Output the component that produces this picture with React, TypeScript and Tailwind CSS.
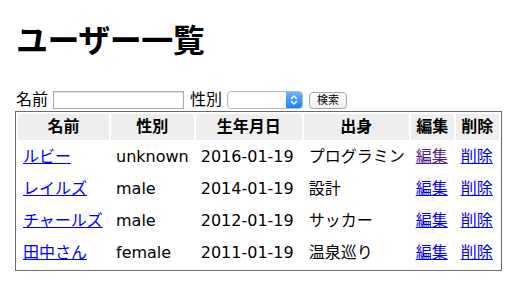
import React from 'react';

type User = {
  name: string;
  gender: string;
  birth: string;
  from: string;
  visited?: boolean;
};

const USERS: User[] = [
  { name: 'ルビー', gender: 'unknown', birth: '2016-01-19', from: 'プログラミン', visited: true },
  { name: 'レイルズ', gender: 'male', birth: '2014-01-19', from: '設計' },
  { name: 'チャールズ', gender: 'male', birth: '2012-01-19', from: 'サッカー' },
  { name: '田中さん', gender: 'female', birth: '2011-01-19', from: '温泉巡り' },
];

const FONT = "font-['DejaVu_Sans','Noto_Sans_CJK_JP',sans-serif]";

export default function App() {
  return (
    <div className={`${FONT} w-[528px] h-[292px] bg-white text-black pl-4 pt-[21px]`}>
      <h1 className="text-[32px] font-bold leading-[40px] tracking-[-0.5px]">ユーザー一覧</h1>

      {/* Search form */}
      <div className="mt-[29px] h-[20px] flex items-center text-[16px] leading-[20px]">
        <span>名前</span>
        <input
          type="text"
          className="ml-[5px] w-[131px] h-[18px] border border-[#a9a9a9] shadow-[inset_0_1px_1px_rgba(0,0,0,0.12)] bg-white outline-none"
        />
        <span className="ml-[6px]">性別</span>
        <div className="ml-[5px] w-[76px] h-[18px] rounded-[4px] border border-[#b5b5b5] bg-white flex justify-end overflow-hidden">
          <div className="w-[16px] h-full bg-[linear-gradient(#6cb3fa,#1a82fb)] flex items-center justify-center">
            <svg width="8" height="12" viewBox="0 0 8 12" fill="none" stroke="white" strokeWidth="1.4" strokeLinecap="round" strokeLinejoin="round">
              <path d="M1.5 4.5L4 2l2.5 2.5" />
              <path d="M1.5 7.5L4 10l2.5-2.5" />
            </svg>
          </div>
        </div>
        <button className="ml-[6px] w-[38px] h-[17px] rounded-[4px] border border-[#a6a6a6] bg-[linear-gradient(#ffffff,#f0f0f0)] text-[11px] leading-[15px] flex items-center justify-center">
          検索
        </button>
      </div>

      {/* User table */}
      <table className="mt-px -ml-px border border-[#6b6b6b] border-separate border-spacing-[2px] text-[16px] leading-[20px]">
        <thead>
          <tr className="h-[26px]">
            <th className="w-[91px] bg-[#eeeeee] p-0 font-bold text-center">名前</th>
            <th className="w-[81px] bg-[#eeeeee] p-0 font-bold text-center">性別</th>
            <th className="w-[106px] bg-[#eeeeee] p-0 font-bold text-center">生年月日</th>
            <th className="w-[105px] bg-[#eeeeee] p-0 font-bold text-center">出身</th>
            <th className="w-[43px] bg-[#eeeeee] p-0 font-bold text-center">編集</th>
            <th className="w-[43px] bg-[#eeeeee] p-0 font-bold text-center">削除</th>
          </tr>
        </thead>
        <tbody>
          {USERS.map((u) => (
            <tr key={u.name} className="h-[30px]">
              <td className="px-[5px] py-0">
                <a href="#" className="text-[#0000ee] underline">{u.name}</a>
              </td>
              <td className="px-[5px] py-0">{u.gender}</td>
              <td className="px-[5px] py-0">{u.birth}</td>
              <td className="px-[5px] py-0 whitespace-nowrap overflow-hidden max-w-[105px]">{u.from}</td>
              <td className="px-[5px] py-0">
                <a href="#" className={u.visited ? 'text-[#551a8b] underline' : 'text-[#0000ee] underline'}>編集</a>
              </td>
              <td className="px-[5px] py-0">
                <a href="#" className="text-[#0000ee] underline">削除</a>
              </td>
            </tr>
          ))}
        </tbody>
      </table>
    </div>
  );
}
